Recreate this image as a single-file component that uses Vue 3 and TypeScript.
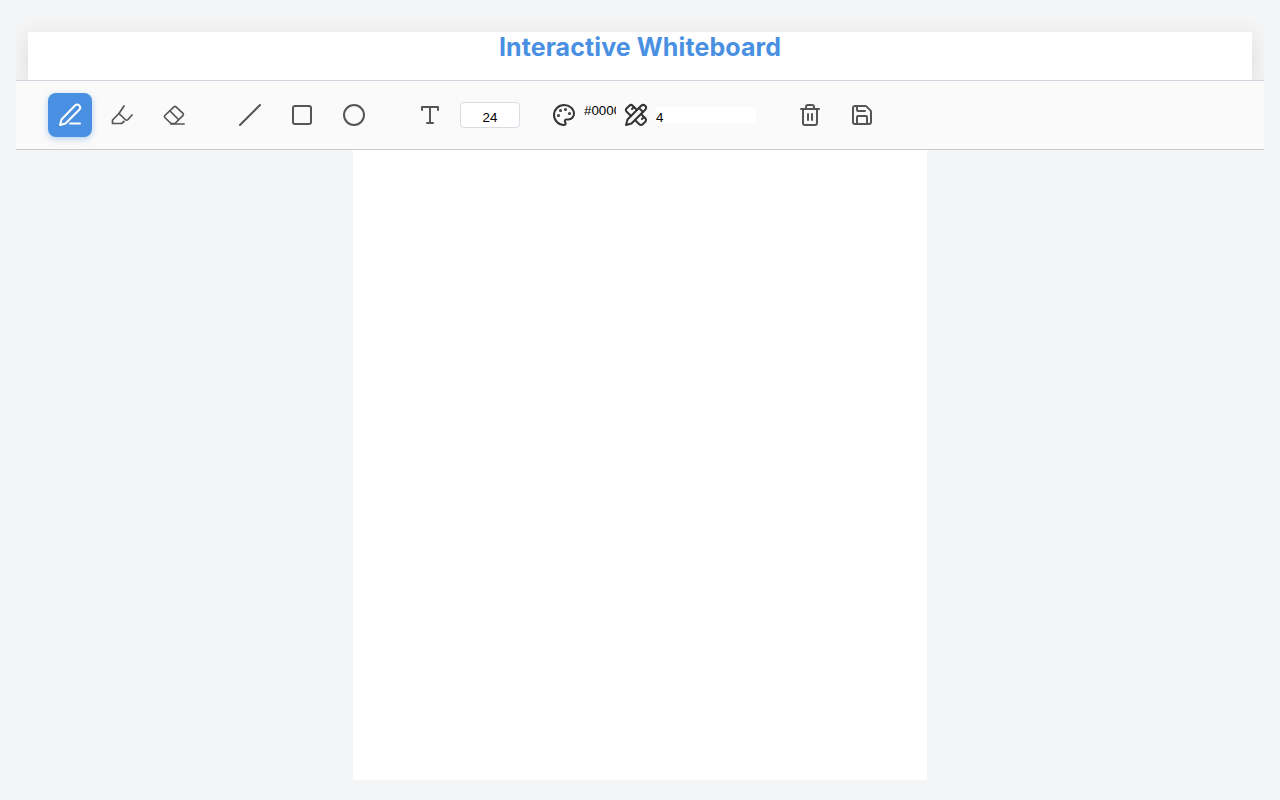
<script setup lang="ts">
import { ref } from 'vue'
const size = ref(24)
const color = ref('#000000')
const stroke = ref(4)
</script>

<template>
  <div class="page">
    <div class="shell">
      <header class="head"><h1>Interactive Whiteboard</h1></header>
    </div>
    <div class="toolbar">
      <div class="group">
        <button class="tool active" aria-label="Pen">
          <svg viewBox="0 0 24 24"><path d="M12 20.500h10" /><path d="M17 2.500a2.900 2.900 0 0 1 4.200 4.200L7.500 20.500 2 22l1.500-5.500Z" /></svg>
        </button>
        <button class="tool" aria-label="Highlighter">
          <svg class="thin" viewBox="0 0 24 24"><path d="m14 3-5 7.500-6.500 6.500v3.500h9l2.500-2" /><path d="m22 12-4 4.500a2 2 0 0 1-2.800 0L9 10.500" /></svg>
        </button>
        <button class="tool" aria-label="Eraser">
          <svg class="thin" viewBox="0 0 24 24"><path d="M9 21h13" /><path d="M2.800 12.500 12 3.800a1.500 1.500 0 0 1 2 0l7 6.500a1.500 1.500 0 0 1 0 2L13 20.500H9l-6.200-6a1.500 1.500 0 0 1 0-2Z" /><path d="m8 8 8 8" /></svg>
        </button>
      </div>
      <div class="group">
        <button class="tool" aria-label="Line"><svg viewBox="0 0 24 24"><path d="M22 2 2 22" /></svg></button>
        <button class="tool" aria-label="Rectangle"><svg viewBox="0 0 24 24"><rect x="3" y="3" width="18" height="18" rx="2" /></svg></button>
        <button class="tool" aria-label="Circle"><svg viewBox="0 0 24 24"><circle cx="12" cy="12" r="10" /></svg></button>
      </div>
      <div class="group tight">
        <button class="tool" aria-label="Text">
          <svg viewBox="0 0 24 24"><path d="M4 7V4h16v3" /><path d="M9 20h6" /><path d="M12 4v16" /></svg>
        </button>
        <input class="size" type="text" v-model="size" />
      </div>
      <div class="group color">
        <button class="tool" aria-label="Color">
          <svg class="dark" viewBox="0 0 24 24"><circle cx="13.500" cy="6.500" r=".5" fill="currentColor" /><circle cx="17.500" cy="10.500" r=".5" fill="currentColor" /><circle cx="8.500" cy="7.500" r=".5" fill="currentColor" /><circle cx="6.500" cy="12.500" r=".5" fill="currentColor" /><path d="M12 2C6.500 2 2 6.500 2 12s4.500 10 10 10c.926 0 1.648-.746 1.648-1.688 0-.437-.18-.835-.437-1.125-.29-.289-.438-.652-.438-1.125a1.640 1.640 0 0 1 1.668-1.668h1.996c3.051 0 5.555-2.503 5.555-5.554C21.965 6.012 17.461 2 12 2z" /></svg>
        </button>
        <input class="colortext" type="text" v-model="color" />
      </div>
      <div class="group stroke">
        <button class="tool" aria-label="Stroke width">
          <svg class="dark" viewBox="0 0 24 24"><path d="m15 5 4 4" /><path d="M13 7 8.700 2.700a2.410 2.410 0 0 0-3.400 0L2.700 5.300a2.410 2.410 0 0 0 0 3.400L7 13" /><path d="m8 6 2-2" /><path d="m2 22 5.500-1.500L21.170 6.830a2.820 2.820 0 0 0-4-4L3.500 16.500Z" /><path d="m18 16 2-2" /><path d="m17 11 4.300 4.300c.94.940.94 2.460 0 3.400l-2.600 2.600c-.94.940-2.460.94-3.400 0L11 17" /></svg>
        </button>
        <input class="stroketext" type="text" v-model="stroke" />
      </div>
      <div class="group actions">
        <button class="tool" aria-label="Clear">
          <svg viewBox="0 0 24 24"><path d="M3 6h18" /><path d="M19 6v14c0 1-1 2-2 2H7c-1 0-2-1-2-2V6" /><path d="M8 6V4c0-1 1-2 2-2h4c1 0 2 1 2 2v2" /><path d="M10 11v6" /><path d="M14 11v6" /></svg>
        </button>
        <button class="tool" aria-label="Save">
          <svg viewBox="0 0 24 24"><path d="M15.200 3a2 2 0 0 1 1.400.6l3.800 3.800a2 2 0 0 1 .6 1.400V19a2 2 0 0 1-2 2H5a2 2 0 0 1-2-2V5a2 2 0 0 1 2-2z" /><path d="M17 21v-7a1 1 0 0 0-1-1H8a1 1 0 0 0-1 1v7" /><path d="M7 3v4a1 1 0 0 0 1 1h7" /></svg>
        </button>
      </div>
    </div>
    <main class="stage"><div class="canvas"></div></main>
  </div>
</template>

<style scoped>
.page {
  display: flex;
  flex-direction: column;
  height: 800px;
  box-sizing: border-box;
  padding: 20px 16px;
  background: #f4f5f7;
  overflow: hidden;
}
.shell {
  height: 60px;
  flex: none;
  padding: 12px 12px 0;
  box-sizing: border-box;
  border-radius: 12px 12px 0 0;
  overflow: hidden;
  background: #f4f4f4;
}
.head {
  height: 48px;
  background: #fff;
  box-shadow: 0 6px 20px rgba(0, 0, 0, 0.1);
  text-align: center;
}
.head h1 {
  margin: 0;
  font: 700 25px/30px Inter, "Liberation Sans", sans-serif;
  letter-spacing: 0.1px;
  color: #4a90e2;
}
.toolbar {
  flex: none;
  height: 70px;
  box-sizing: border-box;
  display: flex;
  align-items: center;
  padding: 0 32px;
  background: #fafafa;
  border-top: 1px solid #d1d5e0;
  border-bottom: 1px solid #cbcbcf;
}
.group {
  display: flex;
  align-items: center;
  gap: 8px;
  margin-right: 32px;
}
.tool {
  width: 44px;
  height: 44px;
  padding: 0;
  display: flex;
  align-items: center;
  justify-content: center;
  border: 0;
  border-radius: 8px;
  background: transparent;
  color: #555;
}
.tool svg {
  width: 24px;
  height: 24px;
  fill: none;
  stroke: currentColor;
  stroke-width: 2;
  stroke-linecap: round;
  stroke-linejoin: round;
}
.tool svg.dark { color: #333; }
.tool svg.thin { stroke-width: 1.7; }
.tool.active {
  background: #4a90e2;
  color: #fff;
  box-shadow: 0 2px 6px rgba(74, 144, 226, 0.4);
}
.tight { margin-right: 22px; }
.size {
  width: 60px;
  height: 26px;
  box-sizing: border-box;
  padding: 5px 0 0;
  border: 1px solid #d9dce3;
  border-radius: 4px;
  background: #fff;
  font: 13.333px "Liberation Sans", sans-serif;
  text-align: center;
  color: #000;
}
.color { margin-right: 0; gap: 0; }
.colortext {
  width: 32px;
  height: 20px;
  margin: 0 -2px 10px -2px;
  padding: 0;
  border: 0;
  background: transparent;
  font: 13.333px "Liberation Sans", sans-serif;
  color: #000;
}
.stroke { gap: 0; margin-right: 32px; }
.stroketext {
  width: 100px;
  height: 16px;
  box-sizing: border-box;
  margin-left: -2px;
  padding: 4px 0 0;
  border: 0;
  background: #fff;
  font: 13.333px "Liberation Sans", sans-serif;
  color: #000;
}
.actions { margin-right: 0; }
.stage {
  flex: 1;
  display: flex;
  justify-content: center;
  min-height: 0;
}
.canvas {
  width: 574px;
  height: 100%;
  background: #fff;
}
</style>
